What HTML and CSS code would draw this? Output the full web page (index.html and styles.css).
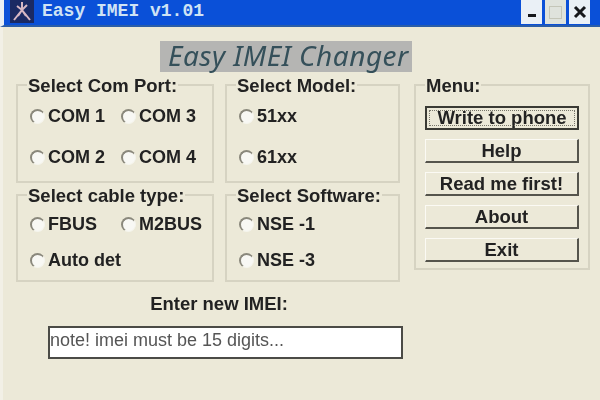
FILE: index.html
```html
<!DOCTYPE html>
<html lang="en">
<head>
  <meta charset="UTF-8">
  <meta name="viewport" content="width=device-width, initial-scale=1.0">
  <title>Easy IMEI v1.01</title>
  <link rel="stylesheet" href="styles.css">
</head>
<body>
  <div class="window">
    <div class="titlebar">
      <svg class="app-icon" width="24" height="23" viewBox="0 0 24 23">
        <rect width="24" height="23" fill="#1b2a63"/>
        <path d="M12 2V10M12 10L4 20M12 10L20 20M12 10L8 16M12 10L16 16M7 6L12 10L17 5" stroke="#d8b8c4" stroke-width="2" fill="none"/>
      </svg>
      <span class="title-text">Easy IMEI v1.01</span>
      <div class="win-buttons">
        <div class="win-btn"><span class="min-mark"></span></div>
        <div class="win-btn win-btn-off"><span class="max-mark"></span></div>
        <div class="win-btn">
          <svg width="14" height="14" viewBox="0 0 14 14"><path d="M2 2L12 12M12 2L2 12" stroke="#16181c" stroke-width="3"/></svg>
        </div>
      </div>
    </div>

    <div class="content">
      <div class="logo-row"><div class="logo">Easy IMEI Changer</div></div>

      <div class="panels">
        <div class="left-panels">
          <fieldset class="group">
            <legend>Select Com Port:</legend>
            <div class="radio-grid">
              <div class="radio"><i></i>COM 1</div>
              <div class="radio"><i></i>COM 3</div>
              <div class="radio"><i></i>COM 2</div>
              <div class="radio"><i></i>COM 4</div>
            </div>
          </fieldset>
          <fieldset class="group">
            <legend>Select Model:</legend>
            <div class="radio-grid">
              <div class="radio radio-wide"><i></i>51xx</div>
              <div class="radio radio-wide"><i></i>61xx</div>
            </div>
          </fieldset>
          <fieldset class="group group-low">
            <legend>Select cable type:</legend>
            <div class="radio-grid">
              <div class="radio"><i></i>FBUS</div>
              <div class="radio"><i></i>M2BUS</div>
              <div class="radio radio-wide"><i></i>Auto det</div>
            </div>
          </fieldset>
          <fieldset class="group group-low">
            <legend>Select Software:</legend>
            <div class="radio-grid">
              <div class="radio radio-wide"><i></i>NSE -1</div>
              <div class="radio radio-wide"><i></i>NSE -3</div>
            </div>
          </fieldset>
        </div>

        <fieldset class="group menu">
          <legend>Menu:</legend>
          <button class="btn btn-default">Write to phone</button>
          <button class="btn">Help</button>
          <button class="btn">Read me first!</button>
          <button class="btn">About</button>
          <button class="btn">Exit</button>
        </fieldset>
      </div>

      <div class="imei">
        <div class="imei-label">Enter new IMEI:</div>
        <div class="imei-input">note! imei must be 15 digits...</div>
      </div>
    </div>
  </div>
</body>
</html>
```

FILE: styles.css
```css
* {
  margin: 0;
  padding: 0;
  box-sizing: border-box;
}

body {
  width: 600px;
  height: 400px;
  overflow: hidden;
  background-color: #ece9d8;
  font-family: "Liberation Sans", Arial, sans-serif;
}

.window {
  height: 400px;
  filter: blur(0.7px);
}

/* Title bar */
.titlebar {
  display: flex;
  align-items: flex-start;
  height: 27px;
  padding-left: 6px;
  padding-right: 10px;
  background-color: #0a50d8;
  border-left: 4px solid #e8eef4;
  border-bottom: 2px solid #2a5da8;
}

.app-icon {
  flex: none;
}

.title-text {
  margin-left: 8px;
  font-family: "Liberation Mono", monospace;
  font-size: 18px;
  font-weight: bold;
  line-height: 22px;
  white-space: pre;
  color: #cfe3f4;
}

.win-buttons {
  display: flex;
  gap: 3px;
  margin-left: auto;
}

.win-btn {
  display: flex;
  align-items: center;
  justify-content: center;
  width: 21px;
  height: 24px;
  background-color: #eaf0f6;
}

.win-btn-off {
  background-color: #dfe3dc;
}

.min-mark {
  width: 8px;
  height: 3px;
  margin-top: 6px;
  background-color: #16181c;
}

.max-mark {
  width: 13px;
  height: 13px;
  border: 1px solid #c4c6b8;
}

/* Main area */
.content {
  height: 373px;
  padding: 14px 10px 0 13px;
  border-left: 3px solid #f2f0e6;
}

.logo-row {
  display: flex;
  padding-left: 144px;
}

.logo {
  width: 252px;
  height: 31px;
  padding-left: 8px;
  background-color: #b5b5b3;
  font-family: "Noto Sans", sans-serif;
  font-size: 28px;
  font-style: italic;
  line-height: 29px;
  letter-spacing: 0.5px;
  white-space: nowrap;
  color: #35505a;
}

.panels {
  display: flex;
  margin-top: 1px;
}

.left-panels {
  display: grid;
  grid-template-columns: 198px 175px;
  grid-template-rows: 110px 99px;
  column-gap: 11px;
  width: 384px;
}

/* Group boxes */
.group {
  min-width: 0;
  height: 110px;
  padding: 0 12px;
  border: 2px solid #d6d3c2;
}

.group-low {
  height: 99px;
}

legend {
  margin-left: -3px;
  padding: 3px 1px 0;
  font-size: 18.5px;
  font-weight: bold;
  line-height: 20px;
  white-space: nowrap;
  color: #222;
}

.radio-grid {
  display: grid;
  grid-template-columns: 91px 1fr;
  grid-auto-rows: 41px;
}

.group-low .radio-grid {
  grid-auto-rows: 36px;
}

.radio {
  display: flex;
  align-items: center;
  gap: 3px;
  font-size: 18px;
  font-weight: bold;
  white-space: nowrap;
  color: #222;
}

.radio-wide {
  grid-column: 1 / -1;
}

.radio i {
  flex: none;
  width: 15px;
  height: 15px;
  border-radius: 50%;
  background-color: #f8f8f4;
  border-top: 2px solid #8a887c;
  border-left: 2px solid #8a887c;
  border-right: 1px solid #f5f4ec;
  border-bottom: 1px solid #f5f4ec;
}

/* Menu */
.menu {
  display: flex;
  flex-direction: column;
  gap: 9px;
  width: 176px;
  height: 197px;
  margin-left: 14px;
  padding: 0 9px;
}

.menu legend {
  margin-left: 0;
}

.btn {
  flex: none;
  height: 24px;
  border: none;
  border-top: 1px solid #fbfaf4;
  border-left: 1px solid #fbfaf4;
  border-right: 2px solid #55544c;
  border-bottom: 2px solid #55544c;
  background-color: #ece9d8;
  font-family: inherit;
  font-size: 18.5px;
  font-weight: bold;
  line-height: 20px;
  color: #222;
}

.btn-default {
  margin-top: 10px;
  border: 2px solid #3a3a34;
  outline: 1px dotted #77756a;
  outline-offset: -5px;
}

/* IMEI input */
.imei {
  width: 355px;
  margin-top: 12px;
  margin-left: 32px;
}

.imei-label {
  margin-bottom: 12px;
  padding-right: 13px;
  font-size: 18.5px;
  font-weight: bold;
  line-height: 20px;
  text-align: center;
  color: #222;
}

.imei-input {
  height: 33px;
  padding-left: 0;
  border: 2px solid #4b4b46;
  background-color: #fff;
  font-size: 18px;
  line-height: 25px;
  color: #555;
}
```
